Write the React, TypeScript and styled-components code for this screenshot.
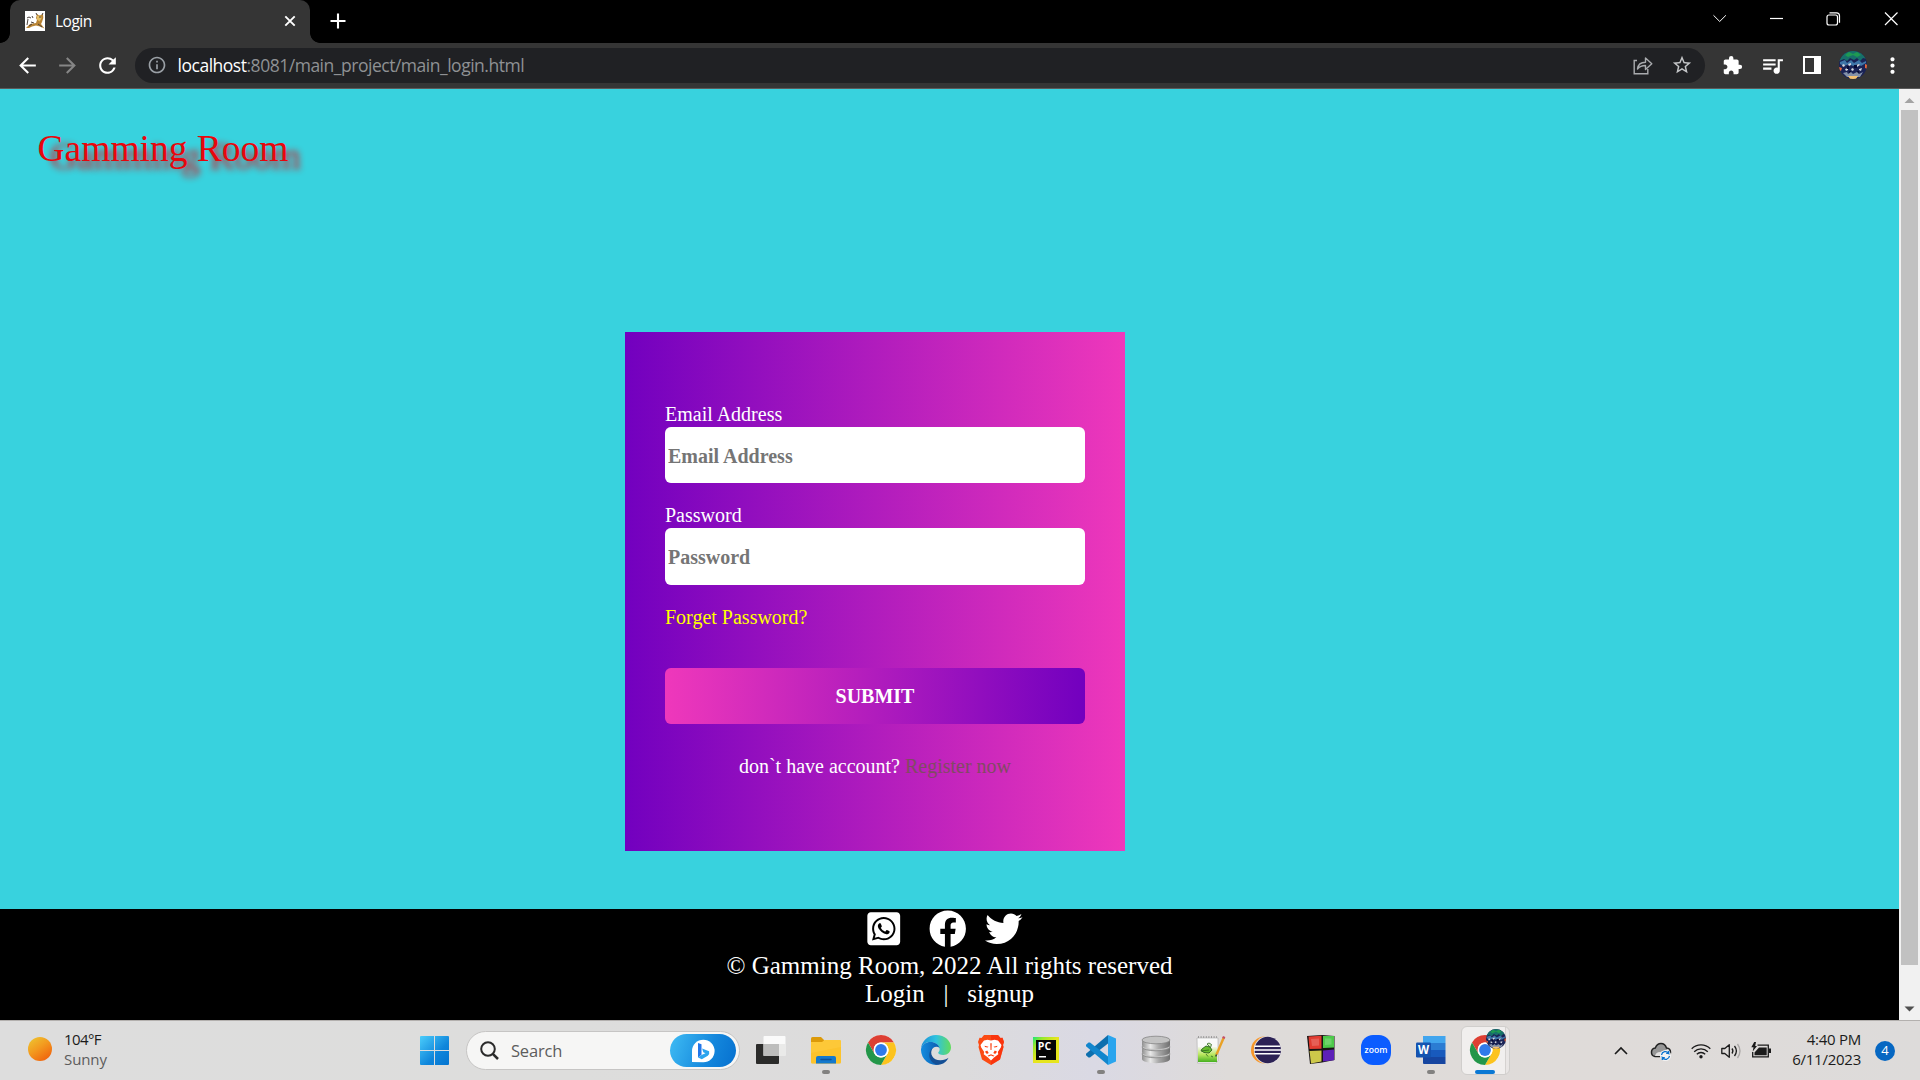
import React from "react";
import styled, { createGlobalStyle, css } from "styled-components";
import { FaWhatsappSquare, FaFacebook, FaTwitter } from "react-icons/fa";
import {
  MdArrowBack,
  MdArrowForward,
  MdRefresh,
  MdInfoOutline,
  MdStarBorder,
  MdExtension,
  MdQueueMusic,
  MdMoreVert,
} from "react-icons/md";

const GlobalStyle = createGlobalStyle`
  html, body { margin: 0; padding: 0; overflow: hidden; background: #000; }
  *, *::before, *::after { box-sizing: border-box; }
`;

const uiFont = css`
  font-family: "Open Sans", "Noto Sans", sans-serif;
`;

const Screen = styled.div`
  width: 1920px;
  height: 1080px;
  display: flex;
  flex-direction: column;
  overflow: hidden;
  background: #000;
`;

/* ---------- browser chrome ---------- */

const TabStrip = styled.div`
  height: 43px;
  flex: none;
  display: flex;
  align-items: flex-end;
  background: #000;
  ${uiFont}
`;

const TabFoot = styled.div<{ $side: "left" | "right" }>`
  width: 10px;
  height: 10px;
  background: ${(p) =>
    `radial-gradient(circle at ${p.$side === "left" ? "0 0" : "100% 0"}, #000 9.5px, #353535 10.2px)`};
`;

const Tab = styled.div`
  width: 300px;
  height: 43px;
  padding: 0 10px 0 15px;
  display: flex;
  align-items: center;
  background: #353535;
  border-radius: 10px 10px 0 0;
  color: #fff;
  font-size: 15.5px;
`;

const TabTitle = styled.span`
  flex: 1;
  margin-left: 10px;
  line-height: 20px;
  letter-spacing: -0.5px;
  transform: translateY(-1px);
`;

const TabClose = styled.svg`
  width: 20px;
  height: 20px;
  margin-top: -1px;
`;

const Favicon = styled.svg`
  width: 20px;
  height: 20px;
  margin-top: -1px;
`;

const NewTab = styled.svg`
  width: 20px;
  height: 20px;
  margin: 0 0 12px 7.5px;
`;

const WindowControls = styled.div`
  margin-left: auto;
  height: 43px;
  padding: 0 0 6px;
  display: flex;
  align-items: center;
`;

const ControlIcon = styled.svg`
  width: 57.4px;
  height: 37px;
  fill: none;
  stroke: #fff;
  stroke-width: 1.2;
`;

const Toolbar = styled.div`
  height: 46px;
  flex: none;
  display: flex;
  align-items: center;
  padding: 0 15px 1px 15px;
  background: #353535;
  border-bottom: 1px solid #5b5b5b;
  ${uiFont}
`;

const NavIcon = styled.span<{ $dim?: boolean }>`
  width: 40px;
  height: 25px;
  display: flex;
  color: ${(p) => (p.$dim ? "#868686" : "#fff")};
  svg { width: 25px; height: 25px; }
`;

const Omnibox = styled.div`
  width: 1570px;
  height: 35px;
  padding: 0 12px 0 12px;
  display: flex;
  align-items: center;
  border-radius: 18px;
  background: #202124;
  color: #9aa0a6;
  > svg { flex: none; }
`;

const Url = styled.span`
  flex: 1;
  margin-left: 10.5px;
  font-size: 17.5px;
  line-height: 24px;
  letter-spacing: -0.48px;
  color: #8f9194;
  white-space: nowrap;
  b { font-weight: 400; color: #fff; }
`;

const ShareIcon = styled.svg`
  width: 20px;
  height: 20px;
  margin-right: 18px;
`;

const Extensions = styled.div`
  flex: 1;
  display: flex;
  align-items: center;
  color: #fff;
  svg { flex: none; }
`;

const PuzzleSlot = styled.span`
  display: flex;
  margin-left: 17px;
`;
const MusicSlot = styled.span`
  display: flex;
  margin-left: 17px;
`;
const PanelGlyph = styled.span`
  width: 18px;
  height: 18px;
  margin-left: 18px;
  border: 2px solid #fff;
  border-right-width: 7px;
`;
const AvatarSlot = styled.span`
  display: flex;
  margin-left: 17.5px;
`;
const MenuSlot = styled.span`
  display: flex;
  margin-left: 13px;
`;

/* ---------- web page ---------- */

const Viewport = styled.div`
  height: 931px;
  flex: none;
  display: flex;
`;

const Page = styled.div`
  width: 1899px;
  display: flex;
  flex-direction: column;
  font-family: "Liberation Serif", "Times New Roman", serif;
`;

const Main = styled.main`
  height: 820px;
  padding: 38px 0 0 37.5px;
  background: #38d2de;
`;

const Brand = styled.div`
  height: 43px;
  font-size: 37.5px;
  line-height: 43px;
  color: #e8060c;
  text-shadow: 12.5px 7.5px 6.25px rgba(225, 10, 20, 0.9);
`;

const Card = styled.form`
  width: 500px;
  height: 519px;
  margin: 162px 0 0 587.5px;
  padding: 70px 40px 0;
  display: flex;
  flex-direction: column;
  background: linear-gradient(to right, #7200bf, #ef38bb);
  color: #fff;
  font-size: 20px;
  line-height: 23px;
`;

const Label = styled.label`
  display: block;
  height: 25px;
  padding-top: 1px;
`;

const Field = styled.input<{ $tall?: boolean }>`
  width: 420px;
  height: ${(p) => (p.$tall ? 57 : 56)}px;
  margin-bottom: ${(p) => (p.$tall ? 0 : 20)}px;
  padding: 3px 3px 1px;
  border: 0;
  border-radius: 6px;
  background: #fff;
  font: bold 20px "Liberation Serif", serif;
  &::placeholder { color: #757575; opacity: 1; }
`;

const Forget = styled.a`
  margin-top: 21px;
  color: #ff0;
`;

const Submit = styled.button`
  width: 420px;
  height: 56px;
  margin-top: 39px;
  padding: 1px 0 0;
  border: 0;
  border-radius: 6px;
  background: linear-gradient(to left, #7200bf, #ef38bb);
  color: #fff;
  font: bold 20px "Liberation Serif", serif;
`;

const Register = styled.p`
  margin: 31px 0 0;
  text-align: center;
  a { color: #814a63; }
`;

const Footer = styled.footer`
  flex: 1;
  padding-top: 1px;
  background: #000;
  color: #fff;
  font-size: 25px;
  line-height: 28px;
  text-align: center;
`;

const Socials = styled.div`
  height: 42px;
  padding: 0 11px 0 0;
  display: flex;
  justify-content: center;
  svg { flex: none; height: 37.5px; }
`;
const SocialGap = styled.span<{ $w: number }>`
  width: ${(p) => p.$w}px;
`;

const FooterLinks = styled.div`
  white-space: pre;
`;

const Scrollbar = styled.div`
  width: 21px;
  height: 931px;
  display: flex;
  flex-direction: column;
  align-items: center;
  background: #f1f1f1;
`;
const ScrollArrow = styled.svg`
  width: 21px;
  height: 21px;
`;
const ScrollThumb = styled.div`
  width: 17px;
  height: 855px;
  margin-bottom: 34px;
  background: #c1c1c1;
`;

/* ---------- taskbar ---------- */

const Taskbar = styled.div`
  height: 60px;
  flex: none;
  display: flex;
  align-items: center;
  border-top: 1px solid #b3b0ae;
  background: linear-gradient(90deg, #dddddd 0, #dddddc 30%, #dcdbdc 50%, #dad9e4 57%, #dedbd9 64%, #dfdbd9 84%, #dddbda 100%);
  ${uiFont}
  svg { display: block; flex: none; }
`;

const Weather = styled.div`
  width: 392px;
  padding-left: 28px;
  display: flex;
  align-items: center;
`;
const Sun = styled.div`
  width: 24px;
  height: 24px;
  margin-top: -3px;
  border-radius: 50%;
  background: linear-gradient(145deg, #edc531 5%, #f39a1f 45%, #f0620e 90%);
`;
const WeatherText = styled.div`
  margin: -4px 0 0 12px;
  font-size: 15px;
  line-height: 20px;
  letter-spacing: -0.6px;
  color: #1b1b1b;
  span { display: block; }
  span + span { color: #5c5c5c; letter-spacing: -0.1px; }
`;

const SearchBox = styled.div`
  width: 274px;
  height: 39px;
  margin-left: 17px;
  padding: 0 3px 0 13px;
  display: flex;
  align-items: center;
  border: 1px solid #c6c5c4;
  border-radius: 20px;
  background: #f6f6f5;
  color: #5d5d5d;
  font-size: 16.5px;
`;
const SearchText = styled.span`
  flex: 1;
  margin-left: 12px;
  letter-spacing: -0.2px;
`;
const BingPill = styled.div`
  width: 66px;
  height: 33px;
  display: flex;
  align-items: center;
  justify-content: center;
  border-radius: 17px;
  background: linear-gradient(110deg, #3fbcf4, #1487dc 60%, #0670cf);
`;

const Apps = styled.div`
  height: 59px;
  margin-left: 3px;
  display: flex;
`;
const AppSlot = styled.div`
  width: 55px;
  height: 59px;
  padding-top: 14px;
  display: flex;
  flex-direction: column;
  align-items: center;
`;
const AppIcon = styled.svg`
  width: 30px;
  height: 30px;
  overflow: visible;
`;
const Indicator = styled.span<{ $active?: boolean }>`
  width: ${(p) => (p.$active ? 20 : 8)}px;
  height: 4px;
  margin-top: 5px;
  border-radius: 2px;
  background: ${(p) => (p.$active ? "#0a78d4" : "#828180")};
`;
const ActiveTile = styled.div`
  width: 49px;
  height: 49px;
  margin: 5px 0 0 3px;
  padding: 8px 0 0 8px;
  border: 1px solid #d0cecc;
  border-radius: 6px;
  background: linear-gradient(90deg, #f1efee 43px, #d5d2d0 43px, #d5d2d0 44px, #e9e6e5 44px);
  ${Indicator} { display: block; margin: 5px 0 0 5px; }
`;

const Tray = styled.div`
  margin-left: auto;
  padding-right: 25px;
  display: flex;
  align-items: center;
`;
const TrayIcon = styled.svg<{ $gap: number }>`
  width: 20px;
  height: 20px;
  margin-right: ${(p) => p.$gap}px;
  overflow: visible;
`;
const Clock = styled.div`
  width: 90px;
  margin-top: -4px;
  text-align: right;
  font-size: 15px;
  line-height: 20px;
  letter-spacing: -0.25px;
  color: #1b1b1b;
  white-space: nowrap;
`;
const Notice = styled.div`
  width: 20px;
  height: 20px;
  margin-left: 14px;
  display: grid;
  place-items: center;
  border-radius: 50%;
  background: #0667c2;
  color: #fff;
  font-size: 13px;
  line-height: 19px;
`;

const Avatar = ({ size }: { size: number }) => (
  <svg width={size} height={size} viewBox="0 0 28 28">
    <clipPath id={`av${size}`}><circle cx="14" cy="14" r="14" /></clipPath>
    <g clipPath={`url(#av${size})`}>
      <rect width="28" height="28" fill="#1a2356" />
      <path d="M0 0h28v8l-4-1-3 3-3-3-3 2-4-2-3 3-3-2-5 2z" fill="#17706a" />
      <path d="M6 4l4-3 4 2 4-2 4 3-4 2-4-2-5 2z" fill="#1e9a52" />
      <path d="M1 11l5-2 2 3 4-3 3 3 5-3 3 3 4-2v2l-5 3-3-2-5 2-4-2-5 2-4-2z" fill="#3f76a8" />
      <path d="M3 14l2-1 1 2-2 1zM9 13l3-1v2l-2 1zM17 14l3-1 1 1-3 2zM6 18l3-1v2l-2 1zM13 17l2 1-1 2-2-1zM20 18l3-1-1 3-2-1z" fill="#d4d7de" />
      <path d="M0 16l3 1-1 3-3-1zM26 13l3 1v4l-3-1z" fill="#e5673a" />
      <path d="M8 15h2v3H8zM15 14h3v3h-3zM10 20h2v3h-2zM18 20h2v3h-2z" fill="#060a35" />
      <path d="M4 22l4-1 1 2 3-2 2 2 4-2 2 2 4-2-3 5H8z" fill="#8390a8" />
      <path d="M9 25h10l-2 3h-6z" fill="#f3c071" />
    </g>
  </svg>
);

const ChromeMark = () => (
  <>
    <circle cx="15" cy="15" r="15" fill="#fff" />
    <path d="M2 7.500A15 15 0 0 1 28 7.500H15A7.500 7.500 0 0 0 8.500 11.250L8.500 18.750z" fill="#dd3f33" />
    <path d="M28 7.500A15 15 0 0 1 15 30L21.500 18.750A7.500 7.500 0 0 0 15 7.500z" fill="#fcc31e" />
    <path d="M15 30A15 15 0 0 1 2 7.500L8.500 18.750A7.500 7.500 0 0 0 21.500 18.750z" fill="#239649" />
    <circle cx="15" cy="15" r="7.500" fill="#fff" />
    <circle cx="15" cy="15" r="5.900" fill="#2f7aea" />
  </>
);

const Explorer = () => (
  <AppIcon viewBox="0 0 30 30">
    <path d="M0 3.500Q0 2 1.500 2h8.500l3 3v4H0z" fill="#dc9a0a" />
    <path d="M0 7h11l2.500-2H29q1 0 1 1v21q0 1.500-1.500 1.500h-27Q0 28.500 0 27z" fill="#fdc838" />
    <path d="M0 18L30 12v15q0 1.500-1.500 1.500h-27Q0 28.500 0 27z" fill="#fbbf24" opacity=".6" />
    <path d="M5 28.500V23q0-2 2-2h16q2 0 2 2v5.500z" fill="#1479cd" />
    <path d="M10 24.500h10" stroke="#0b519a" strokeWidth="1.500" strokeLinecap="round" />
  </AppIcon>
);

const Edge = () => (
  <AppIcon viewBox="0 0 30 30">
    <defs>
      <linearGradient id="eTop" x1="0" x2="1"><stop offset="0" stopColor="#1b8ed6" /><stop offset=".5" stopColor="#2fc2df" /><stop offset="1" stopColor="#62dc5c" /></linearGradient>
      <linearGradient id="eLow" x1="0" x2="1"><stop offset="0" stopColor="#138de0" /><stop offset="1" stopColor="#0b5aae" /></linearGradient>
    </defs>
    <path d="M0 14A15 15 0 0 1 15 0C24 0 30 6 30 12.500C30 17 26.500 20 22.500 20C19 20 17 18.800 17.200 17.500C18 16.500 19 15.500 18.500 13.500C17.500 9 13 7 9 7C4.500 7 1 10 0 14z" fill="url(#eTop)" />
    <path d="M0 14C1 9.500 5 7 9.500 7C14 7 17.500 9.500 18.600 13C16 10.500 11 12 9.800 16.500C8.500 23 14 29 18.500 29.500A15 15 0 0 1 0 15z" fill="url(#eLow)" />
    <path d="M11.500 13C8 19 12 25.500 19.500 25.300C23 25.200 25.500 24 27.500 22.800C26 26.500 22 29.500 17.500 29.800C12 29.500 8 25 8.300 19.500C8.500 16.500 9.800 14.500 11.500 13z" fill="#144f95" />
  </AppIcon>
);

const Brave = () => (
  <AppIcon viewBox="0 0 30 30">
    <path d="M8 0h14l2.500 3 2-.3L28 7l-1 3 .5 2-3.500 12.500L15 30 6 24.500 2.500 12l.5-2-1-3 1.500-4.300 2 .3z" fill="#fb4b14" />
    <path d="M15 0h7l2.500 3 2-.3L28 7l-1 3 .5 2L24 24.500 15 30z" fill="#fa2c0b" opacity=".7" />
    <path d="M15 5.500l3.500-.7 3.500.6 3.500 4.600-.7 2.500-3 4.500.5 2.300-4.300 3.200L15 25.500l-3-3-4.300-3.200.5-2.300-3-4.500L4.500 10 8 5.400l3.500-.6z" fill="#fff" />
    <path d="M8.500 10.800l4 1-1 .8-2.500-.6zM21.500 10.800l-4 1 1 .8 2.500-.6zM11.200 15.500l1.500 2.500-1.800 1-2-2.200zM18.800 15.500l-1.500 2.500 1.800 1 2-2.200zM14.300 8l.7.500.7-.500-.2 7h-1zM11.500 20.800l3.500-1.600 3.500 1.600-1.200.7-2.300-1-2.300 1z" fill="#fb4112" />
  </AppIcon>
);

const PyCharm = () => (
  <AppIcon viewBox="0 0 30 30">
    <defs><linearGradient id="pc" x1="0" y1="0" x2=".6" y2=".6"><stop offset="0" stopColor="#19e67a" /><stop offset=".35" stopColor="#9be82a" /><stop offset=".8" stopColor="#e6e51e" /></linearGradient></defs>
    <rect x="2" y="2" width="26" height="26" fill="url(#pc)" />
    <rect x="5" y="5" width="20" height="20" fill="#050505" />
    <text x="6.800" y="14.800" fontFamily="Open Sans" fontSize="10.500" fontWeight="700" fill="#fff">PC</text>
    <rect x="8" y="21" width="7" height="1.500" fill="#fff" />
  </AppIcon>
);

const VsCode = () => (
  <AppIcon viewBox="0 0 30 30">
    <path d="M22 0l8 3.500v23L22 30z" fill="#2aa5ee" />
    <path d="M22 0v8.500L4 22.500 2.500 22.600 0 20.300v-1.500z" fill="#0d6fae" />
    <path d="M22 30v-8.500L4 7.500 2.500 7.400 0 9.700v1.500z" fill="#1286cd" />
  </AppIcon>
);

const Database = () => (
  <AppIcon viewBox="0 0 30 30">
    <defs><linearGradient id="db" x1="0" x2="1"><stop offset="0" stopColor="#8f8f8f" /><stop offset=".3" stopColor="#e9e9e9" /><stop offset=".6" stopColor="#a8a8a8" /><stop offset="1" stopColor="#6f6f6f" /></linearGradient></defs>
    {[19, 12, 5].map((y) => (
      <g key={y}>
        <path d={`M1 ${y}v5c0 5.500 28 5.500 28 0v-5z`} fill="url(#db)" />
        <ellipse cx="15" cy={y} rx="14" ry="3.800" fill="#c3c3c3" stroke="#858585" strokeWidth=".8" />
      </g>
    ))}
  </AppIcon>
);

const NotepadPP = () => (
  <AppIcon viewBox="0 0 30 30">
    <defs><linearGradient id="npp" x1="0" x2="0" y1="0" y2="1"><stop offset="0" stopColor="#f3f7ea" /><stop offset=".5" stopColor="#b9e75e" /><stop offset="1" stopColor="#46b020" /></linearGradient></defs>
    <path d="M1 3h21v23l-2 2H1.500z" fill="#f9f9f9" stroke="#aaa" strokeWidth=".6" />
    <path d="M2 12h19v15H2z" fill="url(#npp)" />
    <path d="M2 2h19" stroke="#888" strokeWidth="1.600" strokeDasharray="1 1.600" />
    <path d="M6 14l4-3 4 1 2 3-3 3-5-.5-3-2z" fill="#66bb2c" stroke="#2c6420" strokeWidth=".9" />
    <path d="M11 9l2-1 2.500 1.500-1 3zM5 16l8-1M10 19l2 2.500M15 21l2 1" fill="#d8efbc" stroke="#2c6420" strokeWidth=".8" />
    <path d="M27.800 2.500L20.500 19.500" stroke="#e9a126" strokeWidth="2.400" />
    <path d="M28.200 1.500l-.9 2" stroke="#c3506b" strokeWidth="2.600" />
    <path d="M20.500 19.500l-.8 2" stroke="#333" strokeWidth="1.400" />
  </AppIcon>
);

const Eclipse = () => (
  <AppIcon viewBox="0 0 30 30">
    <circle cx="13.500" cy="15" r="13.500" fill="#f7972a" />
    <circle cx="16.800" cy="15" r="14" fill="#e3dfdf" />
    <circle cx="16.800" cy="15" r="13.200" fill="#2c2255" />
    <path d="M3.500 11.300h26M3 15h27M3.500 18.700h26" stroke="#fff" strokeWidth="1.500" />
  </AppIcon>
);

const CodeBlocks = () => (
  <AppIcon viewBox="0 0 30 30">
    <path d="M1 1l15-1 12.500 1v24l-12.500 2.500L4 29z" fill="#171313" />
    <path d="M2.500 1.500l13-.8v13L3.500 14z" fill="#e13c31" />
    <path d="M17 1h11v11.500L17 13z" fill="#4dc94a" />
    <path d="M3.500 16l12-.5v11L5 28.500z" fill="#cdc84a" />
    <path d="M17 15.500l11-1v10.800l-11 1.200z" fill="#5d21b8" />
    <path d="M5 4l8-.5v7L6 11zM19 3.500h6.500v6L19 10z" fill="#fff" opacity=".18" />
  </AppIcon>
);

const Zoom = () => (
  <AppIcon viewBox="0 0 30 30">
    <rect width="30" height="30" rx="12" fill="#0b5cff" />
    <text x="15" y="17.600" textAnchor="middle" fontFamily="Open Sans" fontSize="8.600" fontWeight="600" fill="#fff">zoom</text>
  </AppIcon>
);

const Word = () => (
  <AppIcon viewBox="0 0 30 30">
    <path d="M7 1h22.500v7H7z" fill="#41a5ee" />
    <path d="M7 8h22.500v7H7z" fill="#2b7cd3" />
    <path d="M7 15h22.500v7H7z" fill="#185abd" />
    <path d="M7 22h22.500v7H8q-1 0-1-1z" fill="#1645a0" />
    <rect x="0" y="7.500" width="15" height="15" rx="1.200" fill="#1453b0" />
    <text x="7.500" y="19.200" textAnchor="middle" fontFamily="Open Sans" fontSize="11.500" fontWeight="700" fill="#fff">W</text>
  </AppIcon>
);

const TaskView = () => (
  <AppIcon viewBox="0 0 30 30">
    <rect x="0" y="9" width="23" height="20" rx="1" fill="#2b2b2a" />
    <rect x="7.500" y="1" width="22" height="20" rx="1" fill="#fafafa" />
    <rect x="7.500" y="9" width="15.500" height="12" fill="#bdbdbc" />
    <path d="M23 9h6.500v11q0 1-1 1H23z" fill="#eaeae9" />
  </AppIcon>
);

const Chrome = () => (
  <AppIcon viewBox="0 0 30 30"><ChromeMark /></AppIcon>
);

const apps: { name: string; Icon: React.FC; running?: boolean }[] = [
  { name: "taskview", Icon: TaskView },
  { name: "explorer", Icon: Explorer, running: true },
  { name: "chrome", Icon: Chrome },
  { name: "edge", Icon: Edge },
  { name: "brave", Icon: Brave },
  { name: "pycharm", Icon: PyCharm },
  { name: "vscode", Icon: VsCode, running: true },
  { name: "database", Icon: Database },
  { name: "notepad", Icon: NotepadPP },
  { name: "eclipse", Icon: Eclipse },
  { name: "codeblocks", Icon: CodeBlocks },
  { name: "zoom", Icon: Zoom },
  { name: "word", Icon: Word, running: true },
];

const BrowserChrome = () => (
  <>
    <TabStrip>
      <TabFoot $side="left" />
      <Tab>
        <Favicon viewBox="0 0 20 20">
          <rect width="20" height="20" fill="#fff" />
          <path d="M1 17l4-4 6-1 1-3-1-2 1-4 2 1.500 2-.5 2-1 .3 4-1.300 4-1 2 3.500 4.500-4.500-2-4-1-4 1-3 1.500z" fill="#b98434" />
          <path d="M12 5l4-.5.5 3-2 3-2.500-2z" fill="#e5bd61" />
          <path d="M2 7q2-2 4 0M3 8l-1 6M7 5l1 2M11 2l1 2M18 2l-1 2M14 6h2M6 11l3 1M4 15l3-2M13 13l4 3" stroke="#4a423c" strokeWidth="1" fill="none" />
        </Favicon>
        <TabTitle>Login</TabTitle>
        <TabClose viewBox="0 0 20 20">
          <path d="M5.300 5.300l9.400 9.400M14.700 5.300l-9.400 9.400" stroke="#fff" strokeWidth="1.900" />
        </TabClose>
      </Tab>
      <TabFoot $side="right" />
      <NewTab viewBox="0 0 20 20">
        <path d="M10 2.500v15M2.500 10h15" stroke="#fff" strokeWidth="2.100" />
      </NewTab>
      <WindowControls>
        <ControlIcon viewBox="0 0 57.400 37"><path d="M23.500 15.300l6.200 6.200 6.200-6.200" strokeWidth="1" /></ControlIcon>
        <ControlIcon viewBox="0 0 57.400 37"><path d="M22 18.500h13" /></ControlIcon>
        <ControlIcon viewBox="0 0 57.400 37">
          <rect x="22" y="15" width="10.500" height="10" rx="2" />
          <path d="M24.500 12.800h7q3 0 3 3v7" />
        </ControlIcon>
        <ControlIcon viewBox="0 0 57.400 37"><path d="M22 12.500l12.500 12.500M34.500 12.500L22 25" /></ControlIcon>
      </WindowControls>
    </TabStrip>
    <Toolbar>
      <NavIcon><MdArrowBack /></NavIcon>
      <NavIcon $dim><MdArrowForward /></NavIcon>
      <NavIcon><MdRefresh /></NavIcon>
      <Omnibox>
        <MdInfoOutline size={20} />
        <Url><b>localhost</b>:8081/main_project/main_login.html</Url>
        <ShareIcon viewBox="0 0 20 20" fill="none" stroke="#a9abae" strokeWidth="1.400">
          <path d="M4 5.500H1.200v13.300h13.600V14" />
          <path d="M4.500 14c.5-4.500 3.500-6.800 8-6.800V3l6.300 5.800-6.300 5.700v-4c-3.500 0-6 1-8 3.500z" strokeLinejoin="round" />
        </ShareIcon>
        <MdStarBorder size={22} color="#c4c6c8" />
      </Omnibox>
      <Extensions>
        <PuzzleSlot><MdExtension size={21} /></PuzzleSlot>
        <MusicSlot><MdQueueMusic size={25} /></MusicSlot>
        <PanelGlyph />
        <AvatarSlot><Avatar size={28} /></AvatarSlot>
        <MenuSlot><MdMoreVert size={25} /></MenuSlot>
      </Extensions>
    </Toolbar>
  </>
);

const LoginPage = () => (
  <Page>
    <Main>
      <Brand>Gamming Room</Brand>
      <Card>
        <Label>Email Address</Label>
        <Field placeholder="Email Address" />
        <Label>Password</Label>
        <Field $tall type="password" placeholder="Password" />
        <Forget>Forget Password?</Forget>
        <Submit type="button">SUBMIT</Submit>
        <Register>don`t have account? <a>Register now</a></Register>
      </Card>
    </Main>
    <Footer>
      <Socials>
        <FaWhatsappSquare size={37.5} />
        <SocialGap $w={26} />
        <FaFacebook size={37.5} />
        <SocialGap $w={18.8} />
        <FaTwitter size={37.5} />
      </Socials>
      <div>© Gamming Room, 2022 All rights reserved</div>
      <FooterLinks>{"Login   |   signup"}</FooterLinks>
    </Footer>
  </Page>
);

const WindowsTaskbar = () => (
  <Taskbar>
    <Weather>
      <Sun />
      <WeatherText><span>104°F</span><span>Sunny</span></WeatherText>
    </Weather>
    <svg width="57" height="29" viewBox="0 0 57 29">
      <defs><linearGradient id="win" gradientUnits="userSpaceOnUse" x1="28" y1="0" x2="57" y2="29"><stop offset="0" stopColor="#4bcdfb" /><stop offset=".6" stopColor="#0f86db" /><stop offset="1" stopColor="#0474d0" /></linearGradient></defs>
      <path d="M28 1q0-1 1-1h13v14H28zM43 0h13q1 0 1 1v13H43zM28 15h14v14H29q-1 0-1-1zM43 15h14v13q0 1-1 1H43z" fill="url(#win)" />
    </svg>
    <SearchBox>
      <svg width="19" height="19" viewBox="0 0 19 19" fill="none" stroke="#2a2a2a" strokeWidth="2">
        <circle cx="8" cy="8" r="6.800" /><path d="M12.800 12.800l5.200 5.200" strokeWidth="2.500" />
      </svg>
      <SearchText>Search</SearchText>
      <BingPill>
        <svg width="24" height="24" viewBox="0 0 24 24">
          <path d="M1 23V12A11.300 11.300 0 1 1 12.300 23.300z" fill="#fff" />
          <path d="M7 4l3.500 1.300v10.500L7 18.500z" fill="#2277e9" />
          <path d="M7 18.500l3.500-2.500 4-1.800-2.200-1-1.200-3.700 7 2.800q.8 3-1.300 4.400l-6 3.500z" fill="#2ba5ee" />
        </svg>
      </BingPill>
    </SearchBox>
    <Apps>
      {apps.map(({ name, Icon, running }) => (
        <AppSlot key={name}>
          <Icon />
          {running && <Indicator />}
        </AppSlot>
      ))}
      <ActiveTile>
        <AppIcon viewBox="0 0 30 30">
          <ChromeMark />
          <g transform="translate(16 -6)"><Avatar size={20} /></g>
        </AppIcon>
        <Indicator $active />
      </ActiveTile>
    </Apps>
    <Tray>
      <TrayIcon $gap={20} viewBox="0 0 20 20"><path d="M4 13l6-6 6 6" fill="none" stroke="#1b1b1b" strokeWidth="1.600" /></TrayIcon>
      <TrayIcon $gap={20} viewBox="0 0 20 20">
        <path d="M4 15.500a4.300 4.300 0 0 1 .3-8.500Q6 2.500 10 2.500T15.500 7q4 .3 4 4.200T16 15.500z" fill="#979797" stroke="#222" strokeWidth="1.500" />
        <path d="M4 15q1-4 5-4t8-3l2 3-2 4z" fill="#e3e1e0" />
        <circle cx="14.500" cy="14.500" r="5.600" fill="#f3f3f3" />
        <path d="M10.500 14a4 4 0 0 1 7.200-1.700V10M18.500 15a4 4 0 0 1-7.200 1.700V19M17.700 12.300h-2.500M11.300 16.700h2.500" fill="none" stroke="#0871cd" strokeWidth="1.300" />
      </TrayIcon>
      <TrayIcon $gap={10} viewBox="0 0 20 20">
        <g fill="none" stroke="#1b1b1b" strokeWidth="1.300"><path d="M.7 7.700a13.200 13.200 0 0 1 18.600 0M3.200 10.700a9.600 9.600 0 0 1 13.600 0M5.800 13.200a6 6 0 0 1 8.400 0" /></g>
        <circle cx="10" cy="15.700" r="1.700" fill="#1b1b1b" />
      </TrayIcon>
      <TrayIcon $gap={10} viewBox="0 0 20 20">
        <g fill="none" stroke="#1b1b1b" strokeWidth="1.300">
          <path d="M.8 7.500h3L8.300 3.700v12.600L3.800 12.500h-3z" strokeLinejoin="round" />
          <path d="M11 7.500q1.800 2.500 0 5M13.500 5q3.800 5 0 10" />
          <path d="M16.500 3q5 7 0 14" stroke="#aaa7a6" />
        </g>
      </TrayIcon>
      <TrayIcon $gap={0} viewBox="0 0 20 20">
        <path d="M6.500 4.200h10.800v11.600H1.700V11" fill="none" stroke="#1b1b1b" strokeWidth="1.300" />
        <path d="M8 6.500h7.700v7.700H3.500v-2.700zM18 7.500h2v4.500h-2zM3.200 1L.3 6.300h2.200L1.700 10.500l4.300-5.500H4.200L5 1z" fill="#1b1b1b" />
      </TrayIcon>
      <Clock><div>4:40 PM</div><div>6/11/2023</div></Clock>
      <Notice>4</Notice>
    </Tray>
  </Taskbar>
);

export default function App() {
  return (
    <Screen>
      <GlobalStyle />
      <BrowserChrome />
      <Viewport>
        <LoginPage />
        <Scrollbar>
          <ScrollArrow viewBox="0 0 21 21"><path d="M5.500 14L10.500 9l5 5z" fill="#a3a3a3" /></ScrollArrow>
          <ScrollThumb />
          <ScrollArrow viewBox="0 0 21 21"><path d="M5.500 7.500l5 5 5-5z" fill="#505050" /></ScrollArrow>
        </Scrollbar>
      </Viewport>
      <WindowsTaskbar />
    </Screen>
  );
}
